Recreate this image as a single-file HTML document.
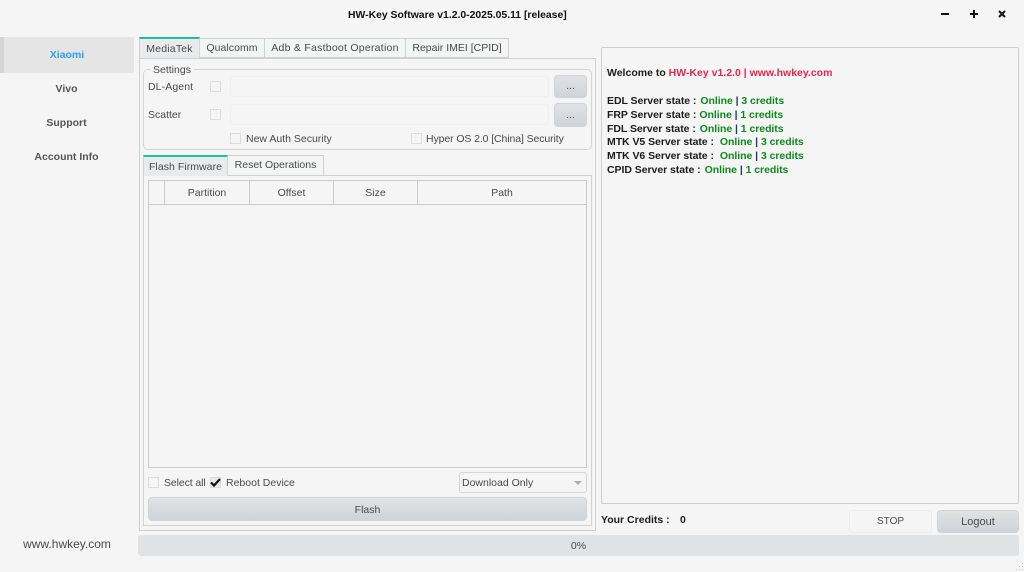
<!DOCTYPE html>
<html><head><meta charset="utf-8">
<style>
html,body{margin:0;padding:0;width:1024px;height:572px;overflow:hidden;background:#f5f5f5}
body{position:relative;font-family:"Liberation Sans",sans-serif;font-size:10.5px;color:#4a4a4a}
.a{position:absolute;box-sizing:border-box}
.t{position:absolute;white-space:nowrap;line-height:14px;height:14px}
.c{text-align:center}
.b{font-weight:bold}
.tab{position:absolute;box-sizing:border-box;background:#f3f4f4;border:1px solid #d0d0d0;border-width:1px 1px 1px 0;text-align:center;color:#4a4a4a;white-space:nowrap}
.sel{background:#e8eaec;border-top:2px solid #1fc0a0;border-left:1px solid #d0d0d0;border-right:1px solid #d8d8d8;border-bottom:0}
.cb{position:absolute;box-sizing:border-box;width:11px;height:11px;border:1px solid #dcdcdc;background:#f5f5f5}
.in{position:absolute;box-sizing:border-box;background:#f5f5f5;border:1px solid #efefef;border-radius:3px}
.btn{position:absolute;box-sizing:border-box;background:linear-gradient(#e0e2e4,#d0d3d8);border:1px solid #d0d2d5;border-radius:4px;text-align:center;color:#4a4a4a}
.th{position:absolute;top:181px;height:23px;line-height:24px;text-align:center;color:#4a4a4a;box-sizing:border-box;border-right:1px solid #cacaca}
.l{position:absolute;left:607px;font-weight:bold;color:#1c1c1c;white-space:nowrap;line-height:14px;font-size:10.5px;letter-spacing:-.05px}
.g{color:#0c8a1c;margin-left:3px}.r{color:#e8254f}.n{color:#1f3a5a}
.l .g + .n + .g{margin-left:0}
</style></head><body>

<div class="t b" style="left:348px;top:9px;width:218px;text-align:center;color:#111;font-size:10.4px">HW-Key Software v1.2.0-2025.05.11 [release]</div>
<svg class="a" style="left:938px;top:8px" width="76" height="14" viewBox="0 0 76 14">
<path d="M3 6H11" stroke="#111" stroke-width="2"/>
<path d="M32 6H40M36 2V10" stroke="#111" stroke-width="2"/>
<path d="M61 3L67 9M67 3L61 9" stroke="#111" stroke-width="2"/>
</svg>

<div class="a" style="left:0;top:37px;width:134px;height:36px;background:#e5e5e5"></div>
<div class="a" style="left:0;top:37px;width:4px;height:36px;background:#d6d6d6"></div>
<div class="t b c" style="left:0;top:48px;width:134px;color:#29a3e6">Xiaomi</div>
<div class="t b c" style="left:0;top:82px;width:133px;color:#555">Vivo</div>
<div class="t b c" style="left:0;top:116px;width:133px;color:#555">Support</div>
<div class="t b c" style="left:0;top:150px;width:133px;color:#555">Account Info</div>
<div class="t c" style="left:0;top:537px;width:134px;font-size:12px;color:#4a4a4a">www.hwkey.com</div>

<!-- main tab pane -->
<div class="a" style="left:139px;top:58px;width:457px;height:473px;border:1px solid #cfcfcf;background:#f5f5f5"></div>
<div class="tab sel" style="left:139px;top:37px;width:61px;height:21px;line-height:21px;letter-spacing:.2px">MediaTek</div>
<div class="tab" style="left:200px;top:38px;width:65px;height:20px;line-height:18px;letter-spacing:.05px">Qualcomm</div>
<div class="tab" style="left:265px;top:38px;width:141px;height:20px;line-height:18px;letter-spacing:.25px">Adb &amp; Fastboot Operation</div>
<div class="tab" style="left:406px;top:38px;width:103px;height:20px;line-height:18px">Repair IMEI [CPID]</div>

<!-- settings group -->
<div class="a" style="left:143px;top:69px;width:449px;height:81px;border:1px solid #d4d4d4;border-radius:5px"></div>
<div class="t" style="left:150px;top:63px;padding:0 3px;background:#f5f5f5;line-height:14px">Settings</div>
<div class="t" style="left:148px;top:80px;letter-spacing:.1px">DL-Agent</div>
<div class="cb" style="left:210px;top:81px"></div>
<div class="in" style="left:230px;top:76px;width:319px;height:21px"></div>
<div class="btn" style="left:554px;top:75px;width:33px;height:23px;line-height:21px">...</div>
<div class="t" style="left:148px;top:108px">Scatter</div>
<div class="cb" style="left:210px;top:109px"></div>
<div class="in" style="left:230px;top:104px;width:319px;height:21px"></div>
<div class="btn" style="left:554px;top:103px;width:33px;height:24px;line-height:22px">...</div>
<div class="cb" style="left:230px;top:133px"></div>
<div class="t" style="left:246px;top:132px">New Auth Security</div>
<div class="cb" style="left:411px;top:133px"></div>
<div class="t" style="left:426px;top:132px;letter-spacing:-.1px">Hyper OS 2.0 [China] Security</div>

<!-- inner tabs -->
<div class="a" style="left:143px;top:175px;width:449px;height:351px;border:1px solid #d2d2d2"></div>
<div class="tab sel" style="left:143px;top:155px;width:85px;height:21px;line-height:21px;letter-spacing:.05px">Flash Firmware</div>
<div class="tab" style="left:228px;top:155px;width:96px;height:21px;line-height:19px">Reset Operations</div>

<!-- table -->
<div class="a" style="left:148px;top:180px;width:439px;height:288px;border:1px solid #cacaca"></div>
<div class="a" style="left:149px;top:204px;width:437px;height:1px;background:#cacaca"></div>
<div class="th" style="left:149px;width:16px"></div>
<div class="th" style="left:165px;width:85px">Partition</div>
<div class="th" style="left:250px;width:84px">Offset</div>
<div class="th" style="left:334px;width:84px">Size</div>
<div class="th" style="left:418px;width:168px;border-right:0">Path</div>

<!-- bottom row -->
<div class="cb" style="left:148px;top:477px"></div>
<div class="t" style="left:164px;top:476px;letter-spacing:-.1px">Select all</div>
<div class="cb" style="left:210px;top:477px;background:#e8e8e8"></div>
<svg class="a" style="left:210px;top:477px" width="11" height="11" viewBox="0 0 11 11"><path d="M1 5.5L4 8.5L10 2" fill="none" stroke="#111" stroke-width="2.2"/></svg>
<div class="t" style="left:226px;top:476px">Reboot Device</div>
<div class="a" style="left:459px;top:472px;width:128px;height:21px;border:1px solid #d4d4d4;border-radius:3px;background:#f5f5f5;line-height:20px;padding-left:2px;color:#4a4a4a">Download Only</div>
<div class="a" style="left:574px;top:481px;width:0;height:0;border-left:4px solid transparent;border-right:4px solid transparent;border-top:4px solid #b0b0b0"></div>
<div class="btn" style="left:148px;top:497px;width:439px;height:24px;line-height:24px">Flash</div>

<!-- right panel -->
<div class="a" style="left:601px;top:47px;width:418px;height:457px;border:1px solid #cecece;border-radius:2px"></div>
<div class="l" style="top:66px;letter-spacing:0">Welcome to <span class="r">HW-Key v1.2.0 | www.hwkey.com</span></div>
<div class="l" style="top:94px">EDL Server state :<span class="g" style="margin-left:4px">Online</span> <span class="n">|</span> <span class="g">3 credits</span></div>
<div class="l" style="top:108px">FRP Server state :<span class="g" style="margin-left:3px">Online</span> <span class="n">|</span> <span class="g">1 credits</span></div>
<div class="l" style="top:122px">FDL Server state :<span class="g" style="margin-left:4px">Online</span> <span class="n">|</span> <span class="g">1 credits</span></div>
<div class="l" style="top:135px">MTK V5 Server state :<span class="g" style="margin-left:6px">Online</span> <span class="n">|</span> <span class="g">3 credits</span></div>
<div class="l" style="top:149px">MTK V6 Server state :<span class="g" style="margin-left:6px">Online</span> <span class="n">|</span> <span class="g">3 credits</span></div>
<div class="l" style="top:163px">CPID Server state :<span class="g" style="margin-left:4px">Online</span> <span class="n">|</span> <span class="g">1 credits</span></div>

<div class="t b" style="left:601px;top:513px;color:#1c1c1c">Your Credits :</div>
<div class="t b" style="left:680px;top:513px;color:#1c1c1c">0</div>
<div class="a" style="left:849px;top:510px;width:83px;height:23px;border:1px solid #ececec;border-radius:3px;text-align:center;line-height:22px;font-size:10px;color:#4a4a4a">STOP</div>
<div class="btn" style="left:937px;top:510px;width:82px;height:23px;line-height:22px;font-size:11px">Logout</div>

<!-- progress -->
<div class="a" style="left:138px;top:535px;width:881px;height:21px;background:#e0e2e4;border-radius:3px;text-align:center;line-height:22px;color:#4a4a4a">0%</div>

<svg class="a" style="left:1014px;top:562px" width="10" height="10"><path d="M8 1h1v1H8zM5 4h1v1H5zM8 4h1v1H8zM2 7h1v1H2zM5 7h1v1H5zM8 7h1v1H8z" fill="#c4c4c4"/></svg>
</body></html>
